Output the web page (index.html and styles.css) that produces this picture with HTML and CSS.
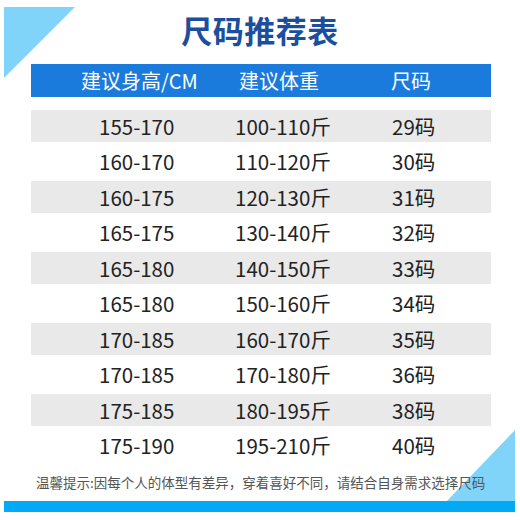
FILE: index.html
```html
<!DOCTYPE html>
<html lang="zh-CN">
<head>
<meta charset="utf-8">
<title>尺码推荐表</title>
<link rel="stylesheet" href="styles.css">
</head>
<body>
<div class="page">
  <div class="tri tri-tl"></div>
  <div class="tri tri-br"></div>
  <h1 class="title">尺码推荐表</h1>
  <div class="table">
    <div class="row head">
      <div class="c1">建议身高/CM</div>
      <div class="c2">建议体重</div>
      <div class="c3">尺码</div>
    </div>
    <div class="row body gray"><div class="c1">155-170</div><div class="c2">100-110斤</div><div class="c3">29码</div></div>
    <div class="row body"><div class="c1">160-170</div><div class="c2">110-120斤</div><div class="c3">30码</div></div>
    <div class="row body gray"><div class="c1">160-175</div><div class="c2">120-130斤</div><div class="c3">31码</div></div>
    <div class="row body"><div class="c1">165-175</div><div class="c2">130-140斤</div><div class="c3">32码</div></div>
    <div class="row body gray"><div class="c1">165-180</div><div class="c2">140-150斤</div><div class="c3">33码</div></div>
    <div class="row body"><div class="c1">165-180</div><div class="c2">150-160斤</div><div class="c3">34码</div></div>
    <div class="row body gray"><div class="c1">170-185</div><div class="c2">160-170斤</div><div class="c3">35码</div></div>
    <div class="row body"><div class="c1">170-185</div><div class="c2">170-180斤</div><div class="c3">36码</div></div>
    <div class="row body gray"><div class="c1">175-185</div><div class="c2">180-195斤</div><div class="c3">38码</div></div>
    <div class="row body"><div class="c1">175-190</div><div class="c2">195-210斤</div><div class="c3">40码</div></div>
  </div>
  <p class="note">温馨提示:因每个人的体型有差异，穿着喜好不同，请结合自身需求选择尺码</p>
  <div class="bar"></div>
</div>
</body>
</html>
```

FILE: styles.css
```css
html, body {
  margin: 0;
  padding: 0;
  background: #ffffff;
}
.page {
  position: relative;
  width: 520px;
  height: 520px;
  overflow: hidden;
  background: #ffffff;
  font-family: "Noto Sans CJK SC", "Noto Sans", sans-serif;
  display: flex;
  flex-direction: column;
}
.tri {
  position: absolute;
  background: #80d3f9;
}
.tri-tl {
  left: 4px;
  top: 7px;
  width: 71px;
  height: 71px;
  clip-path: polygon(0 0, 100% 0, 0 100%);
}
.tri-br {
  right: 5px;
  top: 430px;
  width: 70px;
  height: 73px;
  clip-path: polygon(100% 0, 100% 100%, 0 100%);
}
.title {
  position: relative;
  margin: 0;
  height: 60px;
  line-height: 60px;
  text-align: center;
  font-size: 31px;
  font-weight: 700;
  color: #1b4f9e;
  letter-spacing: 0.5px;
}
.table {
  position: relative;
  margin: 4px 29px 0 31px;
  display: flex;
  flex-direction: column;
}
.row {
  display: grid;
  grid-template-columns: 200px 152px 108px;
  align-items: center;
}
.head {
  height: 33px;
  background: #1a7bdc;
  color: #ffffff;
  font-size: 20px;
  margin-bottom: 11px;
}
.head .c1 { padding-left: 50px; }
.head .c2 { padding-left: 8px; }
.head .c3 { padding-left: 8px; }
.body {
  height: 35.5px;
  font-size: 20.5px;
  color: #222222;
}
.body.gray {
  background: linear-gradient(#e9e9e9, #e9e9e9) center / 100% 32px no-repeat;
}
.body .c1 { padding-left: 68px; }
.body .c2 { padding-left: 4px; }
.body .c3 { padding-left: 9px; }
.row div {
  white-space: nowrap;
  line-height: 1;
}
.note {
  position: relative;
  margin: 10px 0 0 36px;
  font-size: 13.5px;
  color: #555555;
  line-height: 18px;
  white-space: nowrap;
}
.bar {
  position: relative;
  margin: 10px 5px 0 4px;
  height: 11px;
  background: #02aaf6;
}
```
